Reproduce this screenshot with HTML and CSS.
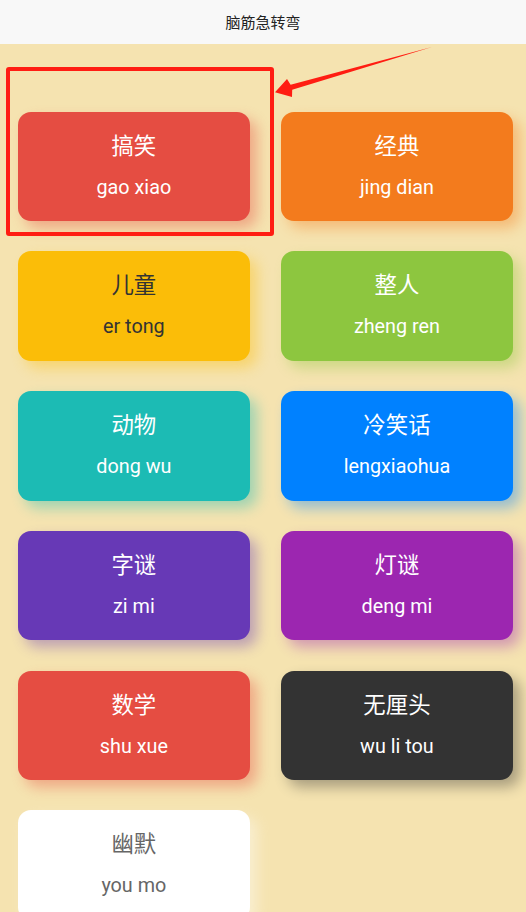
FILE: index.html
```html
<!DOCTYPE html>
<html lang="zh">
<head>
<meta charset="utf-8">
<title>脑筋急转弯</title>
<link rel="stylesheet" href="styles.css">
</head>
<body>
<div class="page">
  <header class="navbar">脑筋急转弯</header>
  <main class="grid">
    <div class="card bg-red"><div class="cn">搞笑</div><div class="py">gao xiao</div></div>
    <div class="card bg-orange"><div class="cn">经典</div><div class="py">jing dian</div></div>
    <div class="card bg-yellow"><div class="cn">儿童</div><div class="py">er tong</div></div>
    <div class="card bg-olive"><div class="cn">整人</div><div class="py">zheng ren</div></div>
    <div class="card bg-cyan"><div class="cn">动物</div><div class="py">dong wu</div></div>
    <div class="card bg-blue"><div class="cn">冷笑话</div><div class="py">lengxiaohua</div></div>
    <div class="card bg-purple"><div class="cn">字谜</div><div class="py">zi mi</div></div>
    <div class="card bg-mauve"><div class="cn">灯谜</div><div class="py">deng mi</div></div>
    <div class="card bg-red"><div class="cn">数学</div><div class="py">shu xue</div></div>
    <div class="card bg-black"><div class="cn">无厘头</div><div class="py">wu li tou</div></div>
    <div class="card bg-white"><div class="cn">幽默</div><div class="py">you mo</div></div>
  </main>
  <div class="mark-box"></div>
  <svg class="mark-arrow" width="526" height="120" viewBox="0 0 526 120" aria-hidden="true">
    <polygon points="275,92.3 287,79 290.6,84.8 432,47 292.2,89.8 292,97" fill="#ff1d12"/>
  </svg>
</div>
</body>
</html>
```

FILE: styles.css
```css
html, body {
  margin: 0;
  padding: 0;
}
body {
  background: #f5e3b0;
  font-family: Roboto, "Noto Sans CJK SC", "Noto Sans", sans-serif;
}
.page {
  position: relative;
  width: 526px;
  height: 912px;
  overflow: hidden;
}
.navbar {
  height: 44px;
  background: #f8f8f8;
  color: #222;
  font-family: "Noto Sans CJK SC", sans-serif;
  font-size: 15px;
  line-height: 44px;
  text-align: center;
}
.grid {
  position: relative;
  z-index: 0;
  display: grid;
  grid-template-columns: 1fr 1fr;
  column-gap: 30.4px;
  row-gap: 30.25px;
  padding: 67.7px 12.7px 0 17.5px;
}
.card {
  position: relative;
  height: 109.5px;
  border-radius: 13px;
  display: flex;
  flex-direction: column;
  align-items: center;
  color: #fff;
  padding-top: 17px;
  box-sizing: border-box;
}
.card::before {
  content: "";
  position: absolute;
  top: 7px;
  left: 7px;
  width: 100%;
  height: 100%;
  background: inherit;
  border-radius: inherit;
  filter: blur(7px);
  opacity: 0.4;
  z-index: -1;
}
.cn {
  font-family: "Noto Sans CJK SC", sans-serif;
  font-size: 22.4px;
  line-height: 30px;
}
.py {
  font-family: Roboto, sans-serif;
  font-size: 19.8px;
  line-height: 30px;
  margin-top: 14px;
}
.bg-red { background: #e54d42; }
.bg-orange { background: #f37b1d; }
.bg-yellow { background: #fbbd08; color: #333; }
.bg-olive { background: #8dc63f; }
.bg-cyan { background: #1cbbb4; }
.bg-blue { background: #0081ff; }
.bg-purple { background: #6739b6; }
.bg-mauve { background: #9c26b0; }
.bg-black { background: #333333; }
.bg-white { background: #ffffff; color: #666; }

.mark-box {
  position: absolute;
  left: 6px;
  top: 66.7px;
  width: 268px;
  height: 169px;
  box-sizing: border-box;
  border: 4px solid #ff1d12;
  border-radius: 3px;
}
.mark-arrow {
  position: absolute;
  left: 0;
  top: 0;
}
```
